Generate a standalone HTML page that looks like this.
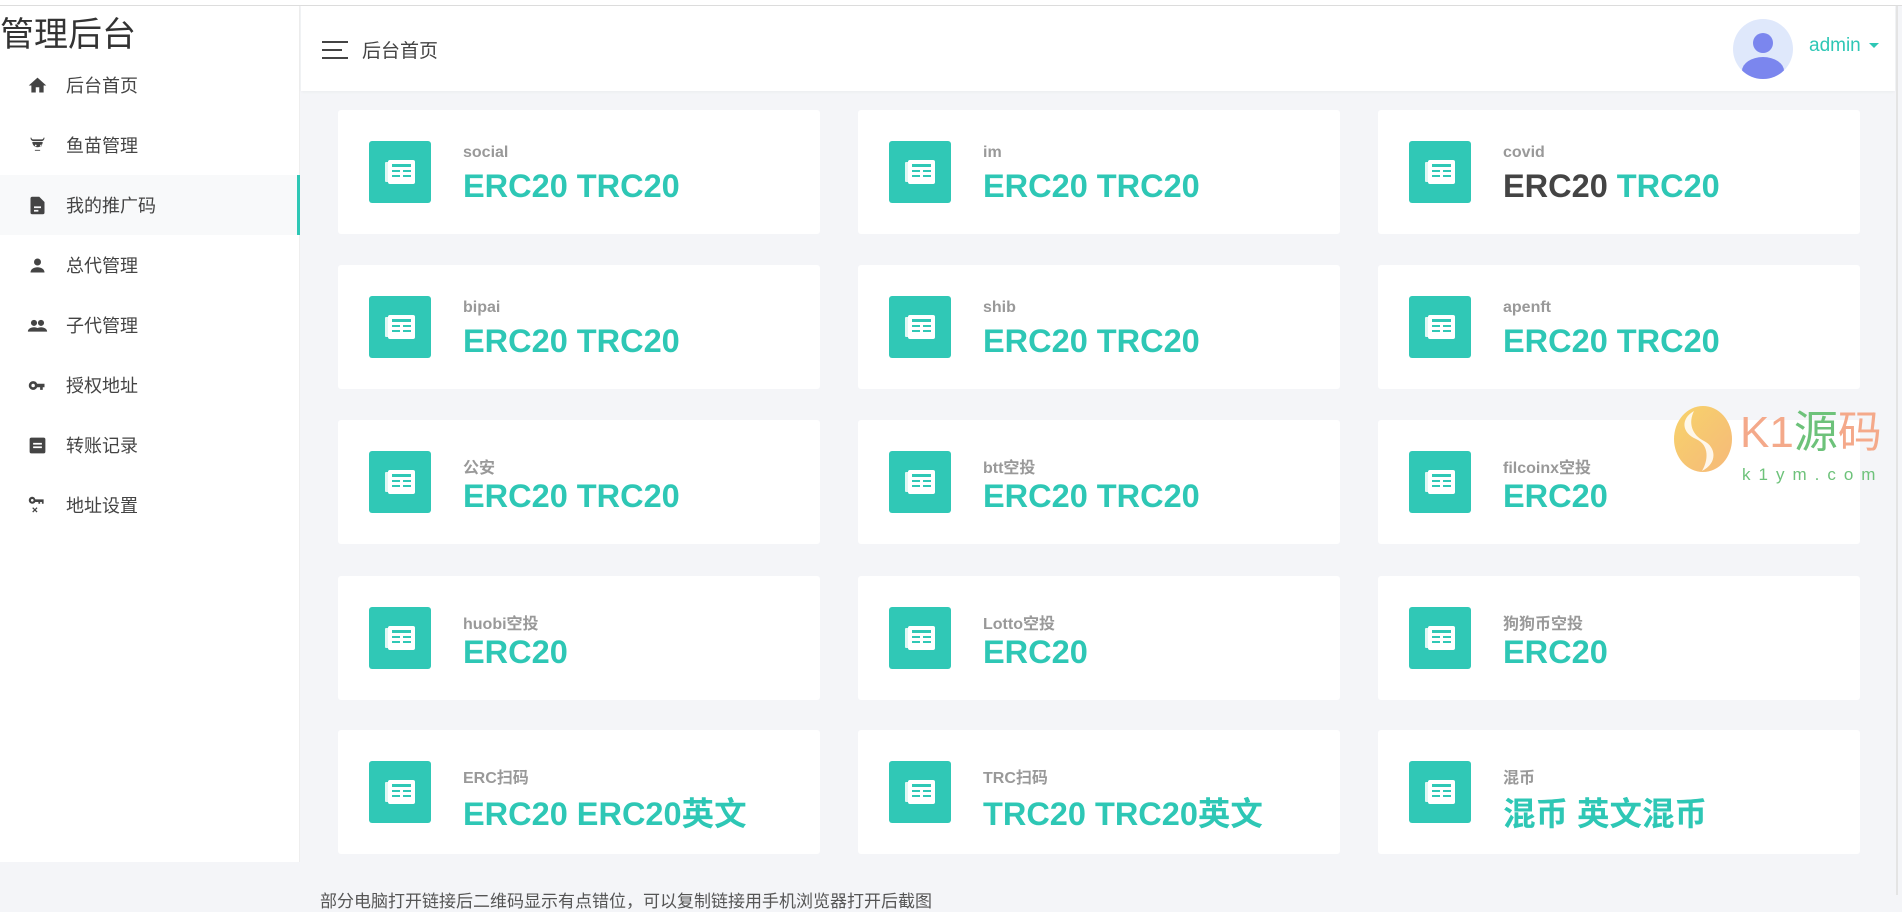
<!DOCTYPE html>
<html><head><meta charset="utf-8">
<style>
*{margin:0;padding:0;box-sizing:border-box}
body{width:1902px;height:895px;overflow:hidden;background:#f4f5f8;font-family:"Liberation Sans","Noto Sans CJK SC",sans-serif;position:relative}
.topline{position:absolute;left:0;top:0;width:1902px;height:6px;background:#fff;border-bottom:1px solid #ddd}
.side{position:absolute;left:0;top:6px;width:300px;height:856px;background:#fff;border-right:1px solid #eee}
.title{position:absolute;left:0;top:6px;font-size:34px;color:#333;line-height:46px}
.menu{position:absolute;left:0;top:49px;width:300px}
.mi{height:60px;display:flex;align-items:center;font-size:18px;color:#444;position:relative}
.mi svg{position:absolute;left:27px;width:21px;height:21px;fill:#444}
.mi span{position:absolute;left:66px}
.mi.act{background:#f8f9fa}
.mi.act:after{content:"";position:absolute;right:0;top:0;width:3px;height:60px;background:#2ec7b5}
.header{position:absolute;left:301px;top:6px;width:1594px;height:85px;background:#fff;box-shadow:0 1px 3px rgba(0,0,0,.04)}
.ham{position:absolute;left:21px;top:35px;width:26px;height:18px}
.ham i{display:block;height:2px;background:#444;margin-bottom:6px}
.ham i:nth-child(2){width:20px}
.htxt{position:absolute;left:61px;top:30px;font-size:19px;color:#444}
.avatar{position:absolute;left:1432px;top:13px;width:60px;height:60px;border-radius:50%;background:#dfe8fb;overflow:hidden}
.admin{position:absolute;left:1508px;top:29px;font-size:19px;color:#2ec7b5}
.admin:after{content:"";display:inline-block;margin-left:8px;vertical-align:middle;border-left:5px solid transparent;border-right:5px solid transparent;border-top:5px solid #2ec7b5}
.rline{position:absolute;left:1896px;top:6px;width:2px;height:889px;background:#e4e4e4}
.card{position:absolute;width:482px;height:124px;background:#fff;border-radius:3px}
.ico{position:absolute;left:31px;top:31px;width:62px;height:62px;background:#30c8b6;border-radius:3px}
.ico svg{position:absolute;left:16px;top:19px}
.lab{position:absolute;left:125px;top:34px;font-size:16px;font-weight:bold;color:#999}
.val{position:absolute;left:125px;top:58px;font-size:32.5px;font-weight:bold;color:#2ec7b5;white-space:nowrap}
.foot{position:absolute;left:320px;top:887px;font-size:17px;color:#555;white-space:nowrap}
.wm{position:absolute;left:1672px;top:405px}
</style></head><body>
<div class="topline"></div>
<div class="side">
<div class="title">管理后台</div>
<div class="menu">
<div class="mi"><svg viewBox="0 0 24 24"><path d="M10 20v-6h4v6h5v-8h3L12 3 2 12h3v8z"/></svg><span>后台首页</span></div>
<div class="mi"><svg viewBox="0 0 24 24"><path d="M4 3c0 3 2 4 4 4h8c2 0 4-1 4-4l-1 0c0 1-1 2-2 2H7C6 5 5 4 5 3zM6 8a6 6 0 1 0 12 0zM9 12a1 1 0 1 1 0 .1zM15 12a1 1 0 1 1 0 .1zM9 17h6v1H9z"/></svg><span>鱼苗管理</span></div>
<div class="mi act"><svg viewBox="0 0 24 24"><path d="M6 2h8l6 6v12a2 2 0 0 1-2 2H6a2 2 0 0 1-2-2V4a2 2 0 0 1 2-2zM8 13v2h8v-2zm0 4v2h5v-2z"/></svg><span>我的推广码</span></div>
<div class="mi"><svg viewBox="0 0 24 24"><circle cx="12" cy="8" r="4"/><path d="M4 20c0-4 4-6 8-6s8 2 8 6z"/></svg><span>总代管理</span></div>
<div class="mi"><svg viewBox="0 0 24 24"><circle cx="8" cy="9" r="3.5"/><circle cx="16" cy="9" r="3.5"/><path d="M1 19c0-3 3-5 7-5s7 2 7 5zM13 19c0-2 0-3-1-4 1-.5 3-1 4-1 4 0 7 2 7 5z"/></svg><span>子代管理</span></div>
<div class="mi"><svg viewBox="0 0 24 24"><path d="M7 7a5 5 0 1 0 4.6 7H15v3h3v-3h2v-4h-8.4A5 5 0 0 0 7 7zm0 3a2 2 0 1 1 0 4 2 2 0 0 1 0-4z"/></svg><span>授权地址</span></div>
<div class="mi"><svg viewBox="0 0 24 24"><path d="M5 3h14a2 2 0 0 1 2 2v14a2 2 0 0 1-2 2H5a2 2 0 0 1-2-2V5a2 2 0 0 1 2-2zm2 6v2h10V9zm0 4v2h10v-2z"/></svg><span>转账记录</span></div>
<div class="mi"><svg viewBox="0 0 24 24"><path d="M6 2a4 4 0 1 0 3.5 6H13v2h2V8h2v2h2V5H9.5A4 4 0 0 0 6 2zm0 2.5a1.5 1.5 0 1 1 0 3 1.5 1.5 0 0 1 0-3zM7 14l2 2 2-2 1 1-2 2 2 2-1 1-2-2-2 2-1-1 2-2-2-2z"/></svg><span>地址设置</span></div>
</div>
</div>
<div class="header">
<div class="ham"><i></i><i></i><i></i></div>
<div class="htxt">后台首页</div>
<div class="avatar"><svg width="60" height="60" viewBox="0 0 60 60"><circle cx="30" cy="24" r="10" fill="#7b86ee"/><ellipse cx="30" cy="52" rx="21" ry="14" fill="#7b86ee"/></svg></div>
<div class="admin">admin</div>
</div>
<div class="rline"></div>

<div class="card" style="left:338px;top:110px"><div class="ico"><svg width="30" height="24" viewBox="0 0 30 24"><rect x="0" y="2" width="4" height="20" rx="1" fill="#fff" opacity=".85"/><rect x="3" y="0" width="27" height="24" rx="2" fill="#fff"/><rect x="7" y="4" width="19" height="3" fill="#30c8b6"/><rect x="7" y="10" width="8" height="2" fill="#30c8b6"/><rect x="18" y="10" width="8" height="2" fill="#30c8b6"/><rect x="7" y="15" width="8" height="2" fill="#30c8b6"/><rect x="18" y="15" width="8" height="2" fill="#30c8b6"/></svg></div><div class="lab">social</div><div class="val">ERC20 TRC20</div></div>
<div class="card" style="left:858px;top:110px"><div class="ico"><svg width="30" height="24" viewBox="0 0 30 24"><rect x="0" y="2" width="4" height="20" rx="1" fill="#fff" opacity=".85"/><rect x="3" y="0" width="27" height="24" rx="2" fill="#fff"/><rect x="7" y="4" width="19" height="3" fill="#30c8b6"/><rect x="7" y="10" width="8" height="2" fill="#30c8b6"/><rect x="18" y="10" width="8" height="2" fill="#30c8b6"/><rect x="7" y="15" width="8" height="2" fill="#30c8b6"/><rect x="18" y="15" width="8" height="2" fill="#30c8b6"/></svg></div><div class="lab">im</div><div class="val">ERC20 TRC20</div></div>
<div class="card" style="left:1378px;top:110px"><div class="ico"><svg width="30" height="24" viewBox="0 0 30 24"><rect x="0" y="2" width="4" height="20" rx="1" fill="#fff" opacity=".85"/><rect x="3" y="0" width="27" height="24" rx="2" fill="#fff"/><rect x="7" y="4" width="19" height="3" fill="#30c8b6"/><rect x="7" y="10" width="8" height="2" fill="#30c8b6"/><rect x="18" y="10" width="8" height="2" fill="#30c8b6"/><rect x="7" y="15" width="8" height="2" fill="#30c8b6"/><rect x="18" y="15" width="8" height="2" fill="#30c8b6"/></svg></div><div class="lab">covid</div><div class="val"><span style="color:#444">ERC20</span> TRC20</div></div>

<div class="card" style="left:338px;top:265px"><div class="ico"><svg width="30" height="24" viewBox="0 0 30 24"><rect x="0" y="2" width="4" height="20" rx="1" fill="#fff" opacity=".85"/><rect x="3" y="0" width="27" height="24" rx="2" fill="#fff"/><rect x="7" y="4" width="19" height="3" fill="#30c8b6"/><rect x="7" y="10" width="8" height="2" fill="#30c8b6"/><rect x="18" y="10" width="8" height="2" fill="#30c8b6"/><rect x="7" y="15" width="8" height="2" fill="#30c8b6"/><rect x="18" y="15" width="8" height="2" fill="#30c8b6"/></svg></div><div class="lab">bipai</div><div class="val">ERC20 TRC20</div></div>
<div class="card" style="left:858px;top:265px"><div class="ico"><svg width="30" height="24" viewBox="0 0 30 24"><rect x="0" y="2" width="4" height="20" rx="1" fill="#fff" opacity=".85"/><rect x="3" y="0" width="27" height="24" rx="2" fill="#fff"/><rect x="7" y="4" width="19" height="3" fill="#30c8b6"/><rect x="7" y="10" width="8" height="2" fill="#30c8b6"/><rect x="18" y="10" width="8" height="2" fill="#30c8b6"/><rect x="7" y="15" width="8" height="2" fill="#30c8b6"/><rect x="18" y="15" width="8" height="2" fill="#30c8b6"/></svg></div><div class="lab">shib</div><div class="val">ERC20 TRC20</div></div>
<div class="card" style="left:1378px;top:265px"><div class="ico"><svg width="30" height="24" viewBox="0 0 30 24"><rect x="0" y="2" width="4" height="20" rx="1" fill="#fff" opacity=".85"/><rect x="3" y="0" width="27" height="24" rx="2" fill="#fff"/><rect x="7" y="4" width="19" height="3" fill="#30c8b6"/><rect x="7" y="10" width="8" height="2" fill="#30c8b6"/><rect x="18" y="10" width="8" height="2" fill="#30c8b6"/><rect x="7" y="15" width="8" height="2" fill="#30c8b6"/><rect x="18" y="15" width="8" height="2" fill="#30c8b6"/></svg></div><div class="lab">apenft</div><div class="val">ERC20 TRC20</div></div>

<div class="card" style="left:338px;top:420px"><div class="ico"><svg width="30" height="24" viewBox="0 0 30 24"><rect x="0" y="2" width="4" height="20" rx="1" fill="#fff" opacity=".85"/><rect x="3" y="0" width="27" height="24" rx="2" fill="#fff"/><rect x="7" y="4" width="19" height="3" fill="#30c8b6"/><rect x="7" y="10" width="8" height="2" fill="#30c8b6"/><rect x="18" y="10" width="8" height="2" fill="#30c8b6"/><rect x="7" y="15" width="8" height="2" fill="#30c8b6"/><rect x="18" y="15" width="8" height="2" fill="#30c8b6"/></svg></div><div class="lab">公安</div><div class="val">ERC20 TRC20</div></div>
<div class="card" style="left:858px;top:420px"><div class="ico"><svg width="30" height="24" viewBox="0 0 30 24"><rect x="0" y="2" width="4" height="20" rx="1" fill="#fff" opacity=".85"/><rect x="3" y="0" width="27" height="24" rx="2" fill="#fff"/><rect x="7" y="4" width="19" height="3" fill="#30c8b6"/><rect x="7" y="10" width="8" height="2" fill="#30c8b6"/><rect x="18" y="10" width="8" height="2" fill="#30c8b6"/><rect x="7" y="15" width="8" height="2" fill="#30c8b6"/><rect x="18" y="15" width="8" height="2" fill="#30c8b6"/></svg></div><div class="lab">btt空投</div><div class="val">ERC20 TRC20</div></div>
<div class="card" style="left:1378px;top:420px"><div class="ico"><svg width="30" height="24" viewBox="0 0 30 24"><rect x="0" y="2" width="4" height="20" rx="1" fill="#fff" opacity=".85"/><rect x="3" y="0" width="27" height="24" rx="2" fill="#fff"/><rect x="7" y="4" width="19" height="3" fill="#30c8b6"/><rect x="7" y="10" width="8" height="2" fill="#30c8b6"/><rect x="18" y="10" width="8" height="2" fill="#30c8b6"/><rect x="7" y="15" width="8" height="2" fill="#30c8b6"/><rect x="18" y="15" width="8" height="2" fill="#30c8b6"/></svg></div><div class="lab">filcoinx空投</div><div class="val">ERC20</div></div>

<div class="card" style="left:338px;top:576px"><div class="ico"><svg width="30" height="24" viewBox="0 0 30 24"><rect x="0" y="2" width="4" height="20" rx="1" fill="#fff" opacity=".85"/><rect x="3" y="0" width="27" height="24" rx="2" fill="#fff"/><rect x="7" y="4" width="19" height="3" fill="#30c8b6"/><rect x="7" y="10" width="8" height="2" fill="#30c8b6"/><rect x="18" y="10" width="8" height="2" fill="#30c8b6"/><rect x="7" y="15" width="8" height="2" fill="#30c8b6"/><rect x="18" y="15" width="8" height="2" fill="#30c8b6"/></svg></div><div class="lab">huobi空投</div><div class="val">ERC20</div></div>
<div class="card" style="left:858px;top:576px"><div class="ico"><svg width="30" height="24" viewBox="0 0 30 24"><rect x="0" y="2" width="4" height="20" rx="1" fill="#fff" opacity=".85"/><rect x="3" y="0" width="27" height="24" rx="2" fill="#fff"/><rect x="7" y="4" width="19" height="3" fill="#30c8b6"/><rect x="7" y="10" width="8" height="2" fill="#30c8b6"/><rect x="18" y="10" width="8" height="2" fill="#30c8b6"/><rect x="7" y="15" width="8" height="2" fill="#30c8b6"/><rect x="18" y="15" width="8" height="2" fill="#30c8b6"/></svg></div><div class="lab">Lotto空投</div><div class="val">ERC20</div></div>
<div class="card" style="left:1378px;top:576px"><div class="ico"><svg width="30" height="24" viewBox="0 0 30 24"><rect x="0" y="2" width="4" height="20" rx="1" fill="#fff" opacity=".85"/><rect x="3" y="0" width="27" height="24" rx="2" fill="#fff"/><rect x="7" y="4" width="19" height="3" fill="#30c8b6"/><rect x="7" y="10" width="8" height="2" fill="#30c8b6"/><rect x="18" y="10" width="8" height="2" fill="#30c8b6"/><rect x="7" y="15" width="8" height="2" fill="#30c8b6"/><rect x="18" y="15" width="8" height="2" fill="#30c8b6"/></svg></div><div class="lab">狗狗币空投</div><div class="val">ERC20</div></div>

<div class="card" style="left:338px;top:730px"><div class="ico"><svg width="30" height="24" viewBox="0 0 30 24"><rect x="0" y="2" width="4" height="20" rx="1" fill="#fff" opacity=".85"/><rect x="3" y="0" width="27" height="24" rx="2" fill="#fff"/><rect x="7" y="4" width="19" height="3" fill="#30c8b6"/><rect x="7" y="10" width="8" height="2" fill="#30c8b6"/><rect x="18" y="10" width="8" height="2" fill="#30c8b6"/><rect x="7" y="15" width="8" height="2" fill="#30c8b6"/><rect x="18" y="15" width="8" height="2" fill="#30c8b6"/></svg></div><div class="lab">ERC扫码</div><div class="val">ERC20 ERC20英文</div></div>
<div class="card" style="left:858px;top:730px"><div class="ico"><svg width="30" height="24" viewBox="0 0 30 24"><rect x="0" y="2" width="4" height="20" rx="1" fill="#fff" opacity=".85"/><rect x="3" y="0" width="27" height="24" rx="2" fill="#fff"/><rect x="7" y="4" width="19" height="3" fill="#30c8b6"/><rect x="7" y="10" width="8" height="2" fill="#30c8b6"/><rect x="18" y="10" width="8" height="2" fill="#30c8b6"/><rect x="7" y="15" width="8" height="2" fill="#30c8b6"/><rect x="18" y="15" width="8" height="2" fill="#30c8b6"/></svg></div><div class="lab">TRC扫码</div><div class="val">TRC20 TRC20英文</div></div>
<div class="card" style="left:1378px;top:730px"><div class="ico"><svg width="30" height="24" viewBox="0 0 30 24"><rect x="0" y="2" width="4" height="20" rx="1" fill="#fff" opacity=".85"/><rect x="3" y="0" width="27" height="24" rx="2" fill="#fff"/><rect x="7" y="4" width="19" height="3" fill="#30c8b6"/><rect x="7" y="10" width="8" height="2" fill="#30c8b6"/><rect x="18" y="10" width="8" height="2" fill="#30c8b6"/><rect x="7" y="15" width="8" height="2" fill="#30c8b6"/><rect x="18" y="15" width="8" height="2" fill="#30c8b6"/></svg></div><div class="lab">混币</div><div class="val">混币 英文混币</div></div>

<div class="foot">部分电脑打开链接后二维码显示有点错位，可以复制链接用手机浏览器打开后截图</div>

<div class="wm">
<svg width="62" height="68" viewBox="0 0 62 68" style="position:absolute;left:0;top:0"><defs><linearGradient id="g" x1="0" y1="0" x2="1" y2="1"><stop offset="0" stop-color="#f7d36a"/><stop offset="1" stop-color="#f6b97a"/></linearGradient></defs><ellipse cx="31" cy="34" rx="29" ry="33" fill="url(#g)"/><path d="M22 6C8 14 10 28 24 34S36 56 30 66C46 58 44 42 32 36S16 18 22 6z" fill="#fff" opacity=".85"/></svg>
<div style="position:absolute;left:68px;top:2px;font-size:44px;line-height:52px;white-space:nowrap;font-family:'Liberation Sans','Noto Sans CJK SC',sans-serif"><span style="color:#f4a98a">K1</span><span style="color:#6dc27a">源</span><span style="color:#f4a98a">码</span></div>
<div style="position:absolute;left:70px;top:60px;font-size:17px;letter-spacing:8px;color:#6dc27a;white-space:nowrap">k1ym.com</div>
</div>
</body></html>
